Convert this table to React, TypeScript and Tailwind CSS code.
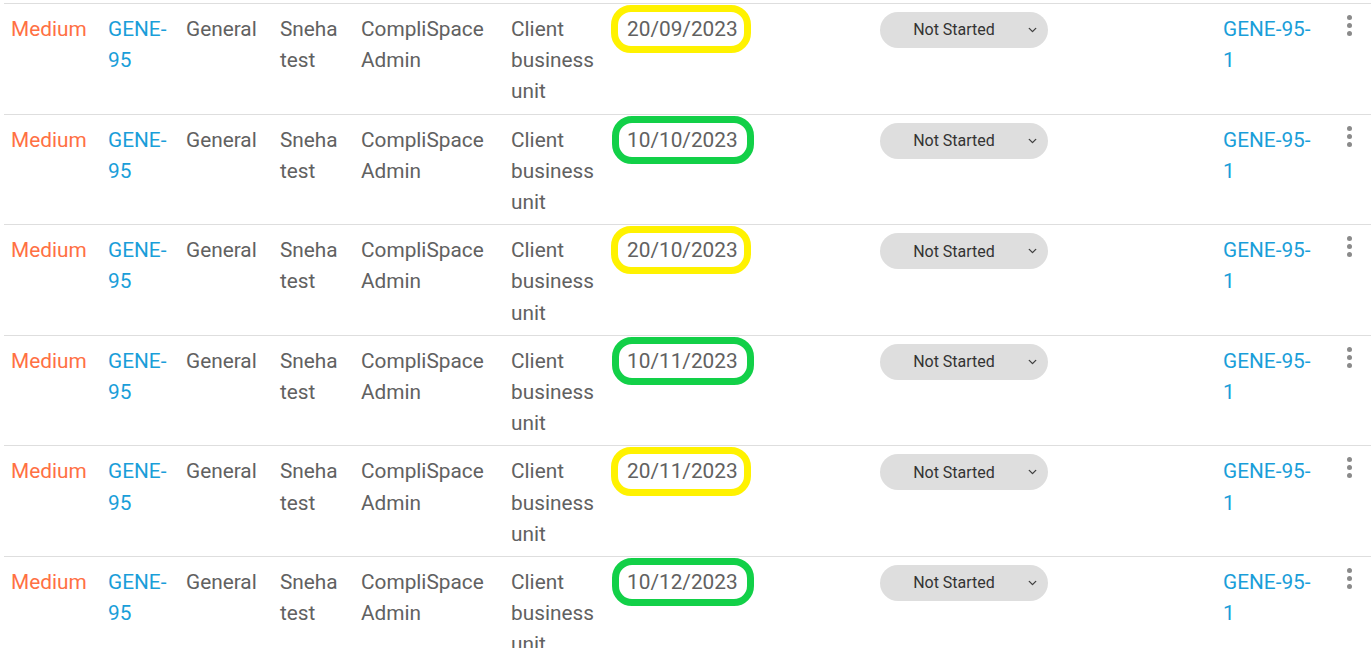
import { ChevronDown } from "lucide-react";

const rows = [
  { date: "20/09/2023", ring: "yellow" },
  { date: "10/10/2023", ring: "green" },
  { date: "20/10/2023", ring: "yellow" },
  { date: "10/11/2023", ring: "green" },
  { date: "20/11/2023", ring: "yellow" },
  { date: "10/12/2023", ring: "green" },
];

function Kebab() {
  return (
    <div className="flex flex-col items-center gap-[3px] pt-[1px] w-[5px]">
      <span className="w-[5px] h-[5px] rounded-full bg-[#8a8a8a]" />
      <span className="w-[5px] h-[5px] rounded-full bg-[#8a8a8a]" />
      <span className="w-[5px] h-[5px] rounded-full bg-[#8a8a8a]" />
    </div>
  );
}

export default function App() {
  return (
    <div
      className="bg-white w-[1371px] h-[648px] overflow-hidden pt-[3px] pl-[4px] text-[20.8px] leading-[31.2px] text-[#616161]"
      style={{ fontFamily: "Roboto, 'Liberation Sans', sans-serif" }}
    >
      {rows.map((row, i) => (
        <div
          key={i}
          className="grid grid-cols-[97px_78px_94px_81px_150px_100px_269px_343px_119px_1fr] border-t border-[#dedede] pt-[10px] pb-[6px]"
        >
          <div className="pl-[7px] text-[#ff7043]">Medium</div>
          <div className="pl-[7px] text-[#1a9ed9]">GENE-95</div>
          <div className="pl-[7px]">General</div>
          <div className="pl-[7px]">Sneha test</div>
          <div className="pl-[7px]">CompliSpace Admin</div>
          <div className="pl-[7px]">Client business unit</div>
          <div className="pl-[7px]">
            {/* highlight ring drawn around the date */}
            <div
              className={
                row.ring === "yellow"
                  ? "w-fit -mt-[9px] border-[7px] border-[#fff200] rounded-[20px] pl-[9px] pr-[6px] pt-[2px] pb-[1px]"
                  : "w-fit -mt-[9px] ml-[1px] border-[7px] border-[#12d048] rounded-[20px] pl-[8px] pr-[9px] pt-[2px] pb-[1px]"
              }
            >
              {row.date}
            </div>
          </div>
          <div className="pl-[7px]">
            <div className="relative w-[168px] h-[36px] -mt-[2px] rounded-full bg-[#dedede] flex items-center justify-center text-[16px] text-[#333333]">
              <span className="-ml-[20px]">Not Started</span>
              <ChevronDown
                className="absolute right-[9px] top-1/2 -translate-y-1/2 w-[13px] h-[13px] text-[#444444]"
                strokeWidth={2.5}
              />
            </div>
          </div>
          <div className="pl-[7px] pr-[20px] text-[#1a9ed9]">GENE-95-1</div>
          <div className="pl-[12px]">
            <Kebab />
          </div>
        </div>
      ))}
    </div>
  );
}
